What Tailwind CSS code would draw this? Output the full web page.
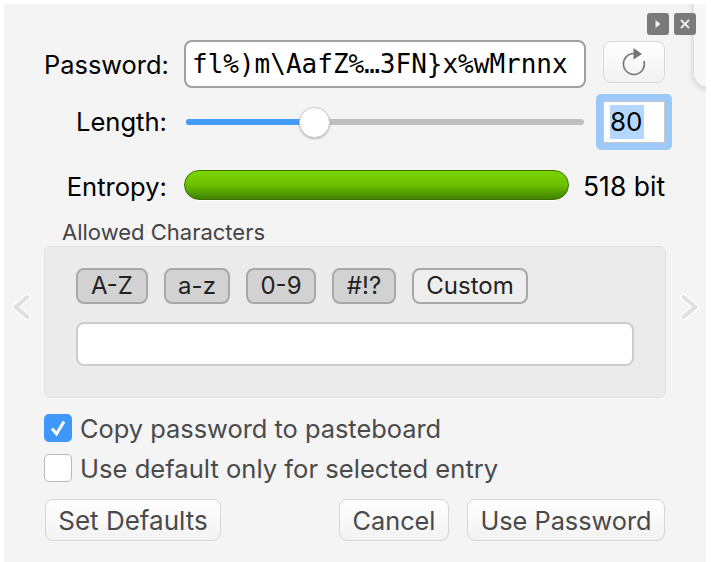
<!DOCTYPE html>
<html lang="en">
<head>
    <meta charset="UTF-8">
    <meta name="viewport" content="width=device-width, initial-scale=1.0">
    <title>Password Generator</title>
    <script src="https://cdn.jsdelivr.net/npm/@tailwindcss/browser@4"></script>
</head>
<body class="h-[562px] w-[711px] overflow-hidden bg-white font-['Inter','Liberation_Sans',sans-serif] text-black">

    <div class="relative ml-[4px] mt-[4px] h-[558px] w-[702px] overflow-hidden bg-[#f4f4f4] pl-[40px] pr-[20px] pt-[36px]">

        <!-- window behind + overlay buttons -->
        <div class="absolute left-[690px] top-[-10px] h-[93px] w-[40px] rounded-bl-[14px] bg-[#f7f7f7] shadow-[-1px_2px_6px_rgba(0,0,0,0.15)]"></div>
        <div class="absolute left-[643px] top-[9px] flex gap-[5px]">
            <div class="flex h-[22px] w-[22px] items-center justify-center rounded-[3px] bg-[#7a7a7a]">
                <svg width="8" height="10" viewBox="0 0 8 10"><path d="M1.5 1 L6.5 5 L1.5 9 Z" fill="#f0f0f0"/></svg>
            </div>
            <div class="flex h-[22px] w-[22px] items-center justify-center rounded-[3px] bg-[#7a7a7a]">
                <svg width="10" height="10" viewBox="0 0 10 10"><path d="M1 1 L9 9 M9 1 L1 9" stroke="#f0f0f0" stroke-width="1.8"/></svg>
            </div>
        </div>

        <!-- prev / next -->
        <svg class="absolute left-[7px] top-[289px]" width="20" height="28" viewBox="0 0 20 28" fill="none" stroke-linecap="round" stroke-linejoin="round">
            <path d="M16.5 4 L4.5 14 L16.5 24" stroke="#fcfcfc" stroke-width="7"/>
            <path d="M16.5 4 L4.5 14 L16.5 24" stroke="#e0e0e0" stroke-width="4"/>
        </svg>
        <svg class="absolute left-[676px] top-[289px]" width="20" height="28" viewBox="0 0 20 28" fill="none" stroke-linecap="round" stroke-linejoin="round">
            <path d="M3.5 4 L15.5 14 L3.5 24" stroke="#fcfcfc" stroke-width="7"/>
            <path d="M3.5 4 L15.5 14 L3.5 24" stroke="#e0e0e0" stroke-width="4"/>
        </svg>

        <!-- password -->
        <div class="flex h-[48px] items-center">
            <div class="w-[123px] pt-[2px] text-right text-[25.4px] leading-none">Password:</div>
            <div class="ml-[17px] flex h-[48px] w-[402px] items-center overflow-hidden rounded-[8px] border-[2px] border-[#a0a0a0] bg-white pl-[6px] font-['DejaVu_Sans_Mono',monospace] text-[26px] whitespace-nowrap">fl%)m\AafZ%…3FN}x%wMrnnx</div>
            <div class="ml-[17px] mb-[5px] flex h-[42px] w-[62px] items-center justify-center rounded-[8px] border border-[#d8d8d8] bg-gradient-to-b from-white to-[#f2f2f2]">
                <svg width="28" height="30" viewBox="0 0 28 30">
                    <path d="M14 6.5 A10.5 10.5 0 1 0 24 14" fill="none" stroke="#757575" stroke-width="1.6"/>
                    <path d="M13.5 1 L22 7 L13.5 12.5 Z" fill="#757575"/>
                </svg>
            </div>
        </div>

        <!-- length -->
        <div class="mt-[6px] flex h-[56px] items-center">
            <div class="w-[123px] text-right text-[25.6px] leading-none">Length:</div>
            <div class="relative ml-[19px] h-[6px] w-[398px] rounded-full bg-[#c0c0c0]">
                <div class="h-[6px] w-[130px] rounded-full bg-[#459dfb]"></div>
                <div class="absolute left-[113px] top-[-12px] h-[31px] w-[31px] rounded-full border border-[#cfcfcf] bg-white shadow-[0_1px_2px_rgba(0,0,0,0.25)]"></div>
            </div>
            <div class="ml-[12px] flex h-[56px] w-[76px] items-center rounded-[5px] bg-[#9dc9fa] p-[7px]">
                <div class="flex h-[42px] w-[62px] items-center border border-[#c8c8c8] bg-white pl-[6px]">
                    <span class="w-[34px] bg-[#b3d7ff] text-[26px] leading-[34px]">80</span>
                </div>
            </div>
        </div>

        <!-- entropy -->
        <div class="mt-[20px] flex h-[30px] items-center">
            <div class="w-[123px] pt-[4px] text-right text-[25.6px] leading-none">Entropy:</div>
            <div class="ml-[17px] h-[30px] w-[385px] rounded-full border-[1.5px] border-[#3d7200] bg-gradient-to-b from-[#7cd400] via-[#6cc000] to-[#3f8200] shadow-[0_1px_0_white]"></div>
            <div class="ml-[14px] pt-[3px] text-[26.5px] leading-none">518 bit</div>
        </div>

        <!-- allowed characters -->
        <div class="mt-[19px] pl-[18px] text-[22px] leading-[26px] text-[#444]">Allowed Characters</div>
        <div class="mt-[1px] h-[152px] w-[622px] rounded-[6px] border border-[#e2e2e2] bg-[#ebebeb] pl-[31px] pt-[21px]">
            <div class="flex gap-[16px] text-[24px] leading-none text-[#222]">
                <div class="flex h-[36px] w-[72px] items-center justify-center rounded-[8px] border-[2px] border-[#a8a8a8] bg-[#d2d2d2]">A-Z</div>
                <div class="flex h-[36px] w-[66px] items-center justify-center rounded-[8px] border-[2px] border-[#a8a8a8] bg-[#d2d2d2]">a-z</div>
                <div class="flex h-[36px] w-[70px] items-center justify-center rounded-[8px] border-[2px] border-[#a8a8a8] bg-[#d2d2d2]">0-9</div>
                <div class="flex h-[36px] w-[64px] items-center justify-center rounded-[8px] border-[2px] border-[#a8a8a8] bg-[#d2d2d2]">#!?</div>
                <div class="flex h-[36px] w-[116px] items-center justify-center rounded-[8px] border-[2px] border-[#a8a8a8] bg-[#eeeeee]">Custom</div>
            </div>
            <div class="mt-[18px] h-[44px] w-[558px] rounded-[8px] border-[2px] border-[#cccccc] bg-white"></div>
        </div>

        <!-- options -->
        <div class="mt-[16px] flex h-[28px] items-center gap-[8px] text-[25.4px] leading-none text-[#4a4a4a]">
            <div class="flex h-[28px] w-[28px] shrink-0 items-center justify-center rounded-[5px] bg-[#3f97fb]">
                <svg width="18" height="18" viewBox="0 0 18 18"><path d="M3 9.5 L7.5 15 L15 2.5" fill="none" stroke="white" stroke-width="3"/></svg>
            </div>
            <span class="pt-[2px]">Copy password to pasteboard</span>
        </div>
        <div class="mt-[12px] flex h-[28px] items-center gap-[8px] text-[25.6px] leading-none text-[#4a4a4a]">
            <div class="h-[28px] w-[28px] shrink-0 rounded-[5px] border border-[#b8b8b8] bg-white"></div>
            <span class="pt-[2px]">Use default only for selected entry</span>
        </div>

        <!-- buttons -->
        <div class="ml-[1px] mt-[17px] flex w-[620px] text-[25.3px] leading-none text-[#4a4a4a]">
            <div class="flex h-[42px] w-[176px] items-center justify-center rounded-[8px] border border-[#d6d6d6] bg-gradient-to-b from-white to-[#f2f2f2] pt-[2px] text-[26px]">Set Defaults</div>
            <div class="ml-auto flex h-[42px] w-[110px] items-center justify-center rounded-[8px] border border-[#d6d6d6] bg-gradient-to-b from-white to-[#f2f2f2] pt-[2px]">Cancel</div>
            <div class="ml-[18px] flex h-[42px] w-[198px] items-center justify-center rounded-[8px] border border-[#d6d6d6] bg-gradient-to-b from-white to-[#f2f2f2] pt-[2px]">Use Password</div>
        </div>
    </div>

</body>
</html>
